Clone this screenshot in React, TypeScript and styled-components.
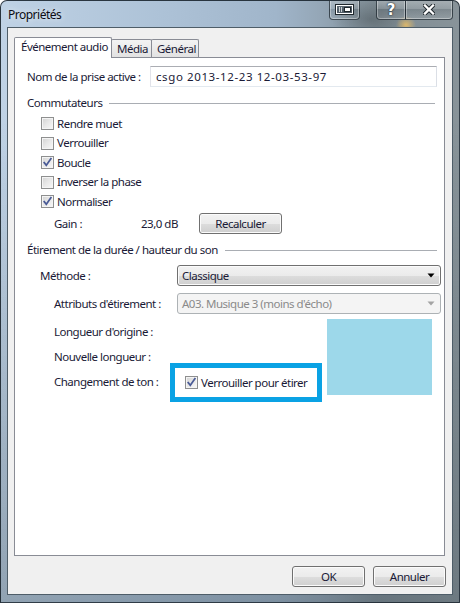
import React from "react";
import styled, { createGlobalStyle } from "styled-components";

const Global = createGlobalStyle`
  html, body { margin: 0; padding: 0; background: #ffffff; }
  body {
    font-family: "Noto Sans", "Open Sans", sans-serif;
    font-size: 11.5px;
    letter-spacing: -0.5px;
    color: #1a1a36;
  }
  * { box-sizing: border-box; }
`;

const Window = styled.div`
  width: 460px;
  height: 603px;
  display: flex;
  flex-direction: column;
  border: 1px solid rgba(25, 35, 45, 0.85);
  border-radius: 7px 7px 0 0;
  overflow: hidden;
  background:
    radial-gradient(ellipse 10px 9px at 405px 24px, rgba(235, 190, 100, 0.85), rgba(235, 190, 100, 0) 100%),
    radial-gradient(ellipse 40px 20px at 370px 18px, rgba(70, 80, 85, 0.45), rgba(70, 80, 85, 0) 100%),
    linear-gradient(to bottom, rgba(60, 75, 85, 0) 0%, rgba(60, 75, 85, 0) 20%, rgba(60, 75, 85, 0.35) 100%),
    linear-gradient(to right, #bfd2e5 0%, #adc2d7 35%, #a0b5ca 60%, #94a6b6 70%, #7f8c94 82%, #889399 100%);
`;

const TitleBar = styled.div`
  height: 26px;
  flex: 0 0 26px;
  display: flex;
  align-items: flex-start;
  padding: 0 6px 0 7px;
`;

const Title = styled.div`
  padding-top: 6px;
  line-height: 16px;
  font-size: 12px;
  color: #0c0c14;
  text-shadow: 0 0 6px rgba(255, 255, 255, 0.8);
`;

const CaptionArea = styled.div`
  margin-left: auto;
  margin-top: -1px;
  display: flex;
  gap: 16px;
`;

const CaptionGroup = styled.div`
  display: flex;
`;

const CaptionButton = styled.div<{ $w: number; $pos: "single" | "left" | "right" }>`
  width: ${(p) => p.$w}px;
  height: 20px;
  display: flex;
  align-items: center;
  justify-content: center;
  border: 1px solid rgba(30, 40, 48, 0.75);
  border-top: none;
  margin-left: ${(p) => (p.$pos === "right" ? -1 : 0)}px;
  border-radius: ${(p) =>
    p.$pos === "single" ? "0 0 4px 4px" : p.$pos === "left" ? "0 0 0 4px" : "0 0 4px 0"};
  box-shadow: inset 0 0 0 1px rgba(255, 255, 255, 0.35);
  background: linear-gradient(
    to bottom,
    rgba(255, 255, 255, 0.28) 0%,
    rgba(255, 255, 255, 0.12) 45%,
    rgba(0, 0, 0, 0.06) 50%,
    rgba(255, 255, 255, 0.1) 100%
  );
  color: #fff;
  font-weight: bold;
  font-size: 15px;
  letter-spacing: 0;
  font-family: "DejaVu Sans", sans-serif;
  text-shadow: 0 0 2px #1c242a, 0 0 1px #1c242a;
`;

const Client = styled.div`
  flex: 1;
  margin: 0 6px 7px 6px;
  background: #f0f0f0;
  border: 1px solid #4e5d68;
  display: flex;
  flex-direction: column;
  padding: 9px 7px 7px 6px;
`;

const TabRow = styled.div`
  display: flex;
  align-items: flex-end;
  height: 20px;
  flex: 0 0 20px;
  position: relative;
  z-index: 1;
`;

const Tab = styled.div<{ $active?: boolean; $w: number; $first?: boolean }>`
  position: relative;
  z-index: ${(p) => (p.$active ? 2 : 1)};
  width: ${(p) => p.$w}px;
  height: ${(p) => (p.$active ? 21 : 18)}px;
  margin-bottom: ${(p) => (p.$active ? -1 : 0)}px;
  margin-left: ${(p) => (p.$first ? 0 : -1)}px;
  border: 1px solid #898c95;
  border-bottom: none;
  border-radius: 2px 2px 0 0;
  background: ${(p) =>
    p.$active ? "#ffffff" : "linear-gradient(to bottom, #f3f3f3 0%, #ebebeb 50%, #e2e2e2 100%)"};
  padding: 1px 0 0 ${(p) => (p.$active ? 6 : 5)}px;
  line-height: 16px;
  white-space: nowrap;
  overflow: hidden;
`;

const Panel = styled.div`
  height: 499px;
  flex: 0 0 499px;
  background: #ffffff;
  border: 1px solid #898c95;
  padding: 8px 3px 0 12px;
  display: flex;
  flex-direction: column;
`;

const NameRow = styled.div`
  display: flex;
  align-items: center;
  height: 21px;
  margin-right: 4px;
`;

const Label = styled.div<{ $w?: number }>`
  flex: 0 0 ${(p) => (p.$w ? `${p.$w}px` : "auto")};
  line-height: 16px;
  white-space: nowrap;
`;

const TextInput = styled.div`
  flex: 1;
  height: 21px;
  display: flex;
  align-items: center;
  padding: 0 5px;
  border: 1px solid;
  border-color: #abadb3 #dbdfe6 #e3e9ef #e2e3ea;
  background: #fff;
  white-space: nowrap;
  letter-spacing: 0.6px;
`;

const SectionHeader = styled.div<{ $inset: number; $gap: number }>`
  margin-top: ${(p) => p.$gap}px;
  height: 16px;
  display: flex;
  align-items: center;
  line-height: 16px;
  white-space: nowrap;
  &::after {
    content: "";
    flex: 1;
    height: 1px;
    margin-left: 7px;
    margin-right: ${(p) => p.$inset}px;
    background: #a9adb3;
  }
`;

const CheckList = styled.div`
  margin-top: 3px;
  padding-left: 14px;
  display: flex;
  flex-direction: column;
`;

const CheckRow = styled.div`
  height: 19.5px;
  display: flex;
  align-items: center;
  gap: 3px;
  line-height: 16px;
  white-space: nowrap;
`;

const Box = styled.span`
  width: 13px;
  height: 13px;
  flex: 0 0 13px;
  display: inline-flex;
  align-items: center;
  justify-content: center;
  border: 1px solid #8e8f8f;
  box-shadow: inset 0 0 0 1px #f4f4f4;
  background: linear-gradient(135deg, #d2d2d2 0%, #e8e8e8 50%, #f8f8f8 100%);
`;

const CheckBox = ({ checked }: { checked?: boolean }) => (
  <Box>
    {checked && (
      <svg width="11" height="11" viewBox="0 0 11 11">
        <path d="M2.2 5.6 L4.3 8.3 L8.9 1.8" fill="none" stroke="#4a5b96" strokeWidth="1.7" strokeLinecap="square" />
      </svg>
    )}
  </Box>
);

const GainRow = styled.div`
  margin-top: 1.5px;
  height: 21px;
  display: flex;
  align-items: center;
  padding-left: 27px;
`;

const PushButton = styled.div<{ $w: number }>`
  width: ${(p) => p.$w}px;
  height: 21px;
  display: flex;
  align-items: center;
  justify-content: center;
  border: 1px solid #707070;
  border-radius: 3px;
  box-shadow: inset 0 0 0 1px #fbfbfb;
  background: linear-gradient(to bottom, #f2f2f2 0%, #ebebeb 50%, #dddddd 51%, #cfcfcf 100%);
  line-height: 16px;
  white-space: nowrap;
`;

const FieldRow = styled.div<{ $indent: number; $gap: number }>`
  margin-top: ${(p) => p.$gap}px;
  height: 21px;
  display: flex;
  align-items: center;
  padding-left: ${(p) => p.$indent}px;
`;

const Select = styled.div<{ $disabled?: boolean }>`
  width: 264px;
  height: 21px;
  display: flex;
  align-items: center;
  padding: 0 5px 0 4px;
  border: 1px solid ${(p) => (p.$disabled ? "#adb2b5" : "#707070")};
  border-radius: 3px;
  color: ${(p) => (p.$disabled ? "#8a8a8a" : "inherit")};
  box-shadow: ${(p) => (p.$disabled ? "none" : "inset 0 0 0 1px #fbfbfb")};
  background: ${(p) =>
    p.$disabled
      ? "#f4f4f4"
      : "linear-gradient(to bottom, #f2f2f2 0%, #ebebeb 50%, #dddddd 51%, #cfcfcf 100%)"};
  white-space: nowrap;
  span { flex: 1; line-height: 16px; }
`;

const Arrow = ({ color }: { color: string }) => (
  <svg width="8" height="5" viewBox="0 0 8 5">
    <path d="M0.5 0.5 H7.5 L4 4.5 Z" fill={color} />
  </svg>
);

const Lower = styled.div`
  margin-top: 5px;
  display: flex;
  padding-left: 27px;
`;

const LabelCol = styled.div`
  width: 116px;
  flex: 0 0 116px;
  padding-top: 5px;
  display: flex;
  flex-direction: column;
  gap: 9px;
`;

const HighlightCol = styled.div`
  width: 152px;
  flex: 0 0 152px;
`;

const Highlight = styled.div`
  margin-top: 44px;
  height: 39px;
  border: 5px solid #0aa2e4;
  background: #fff;
  display: flex;
  align-items: center;
  gap: 3px;
  padding-left: 10px;
  line-height: 16px;
  white-space: nowrap;
`;

const Preview = styled.div`
  width: 105px;
  height: 76px;
  margin-left: 5px;
  background: #9dd8ea;
`;

const ButtonRow = styled.div`
  margin-top: 10px;
  margin-right: -1px;
  display: flex;
  justify-content: flex-end;
  gap: 8px;
`;

const PinIcon = () => (
  <svg width="19" height="11" viewBox="0 0 19 11">
    <rect x="0.5" y="0.5" width="18" height="10" fill="rgba(40,50,58,0.55)" stroke="#1f272d" strokeWidth="1" />
    <rect x="1.5" y="1.5" width="16" height="8" fill="none" stroke="#ffffff" strokeWidth="1" />
    <path d="M4.5 3 V8 M6.5 3 V8" stroke="#c9cfd3" strokeWidth="1" />
    <rect x="9.5" y="3.5" width="6" height="4" fill="#ffffff" stroke="#1f272d" strokeWidth="1" />
  </svg>
);

const CloseIcon = () => (
  <svg width="12" height="11" viewBox="0 0 12 11">
    <path d="M2 1.5 L10 9.5 M10 1.5 L2 9.5" stroke="#1c242a" strokeWidth="4.2" strokeLinecap="round" />
    <path d="M2 1.5 L10 9.5 M10 1.5 L2 9.5" stroke="#ffffff" strokeWidth="2.4" strokeLinecap="square" />
  </svg>
);

export default function App() {
  return (
    <>
      <Global />
      <Window>
        <TitleBar>
          <Title>Propriétés</Title>
          <CaptionArea>
            <CaptionButton $w={31} $pos="single">
              <PinIcon />
            </CaptionButton>
            <CaptionGroup>
              <CaptionButton $w={30} $pos="left">?</CaptionButton>
              <CaptionButton $w={48} $pos="right">
                <CloseIcon />
              </CaptionButton>
            </CaptionGroup>
          </CaptionArea>
        </TitleBar>
        <Client>
          <TabRow>
            <Tab $active $first $w={98}>Événement audio</Tab>
            <Tab $w={41}>Média</Tab>
            <Tab $w={48}>Général</Tab>
          </TabRow>
          <Panel>
            <NameRow>
              <Label $w={123}>Nom de la prise active :</Label>
              <TextInput>csgo 2013-12-23 12-03-53-97</TextInput>
            </NameRow>

            <SectionHeader $gap={8} $inset={6}>Commutateurs</SectionHeader>
            <CheckList>
              <CheckRow><CheckBox />Rendre muet</CheckRow>
              <CheckRow><CheckBox />Verrouiller</CheckRow>
              <CheckRow><CheckBox checked />Boucle</CheckRow>
              <CheckRow><CheckBox />Inverser la phase</CheckRow>
              <CheckRow><CheckBox checked />Normaliser</CheckRow>
            </CheckList>
            <GainRow>
              <Label $w={87}>Gain :</Label>
              <Label $w={58}>23,0 dB</Label>
              <PushButton $w={83}>Recalculer</PushButton>
            </GainRow>

            <SectionHeader $gap={8} $inset={4}>Étirement de la durée / hauteur du son</SectionHeader>
            <FieldRow $indent={13} $gap={7}>
              <Label $w={137}>Méthode :</Label>
              <Select>
                <span>Classique</span>
                <Arrow color="#000000" />
              </Select>
            </FieldRow>
            <FieldRow $indent={27} $gap={7}>
              <Label $w={123}>Attributs d'étirement :</Label>
              <Select $disabled>
                <span>A03. Musique 3 (moins d'écho)</span>
                <Arrow color="#a3a3a3" />
              </Select>
            </FieldRow>
            <Lower>
              <LabelCol>
                <Label>Longueur d'origine :</Label>
                <Label>Nouvelle longueur :</Label>
                <Label>Changement de ton :</Label>
              </LabelCol>
              <HighlightCol>
                <Highlight>
                  <CheckBox checked />
                  Verrouiller pour étirer
                </Highlight>
              </HighlightCol>
              <Preview />
            </Lower>
          </Panel>
          <ButtonRow>
            <PushButton $w={73}>OK</PushButton>
            <PushButton $w={73}>Annuler</PushButton>
          </ButtonRow>
        </Client>
      </Window>
    </>
  );
}
